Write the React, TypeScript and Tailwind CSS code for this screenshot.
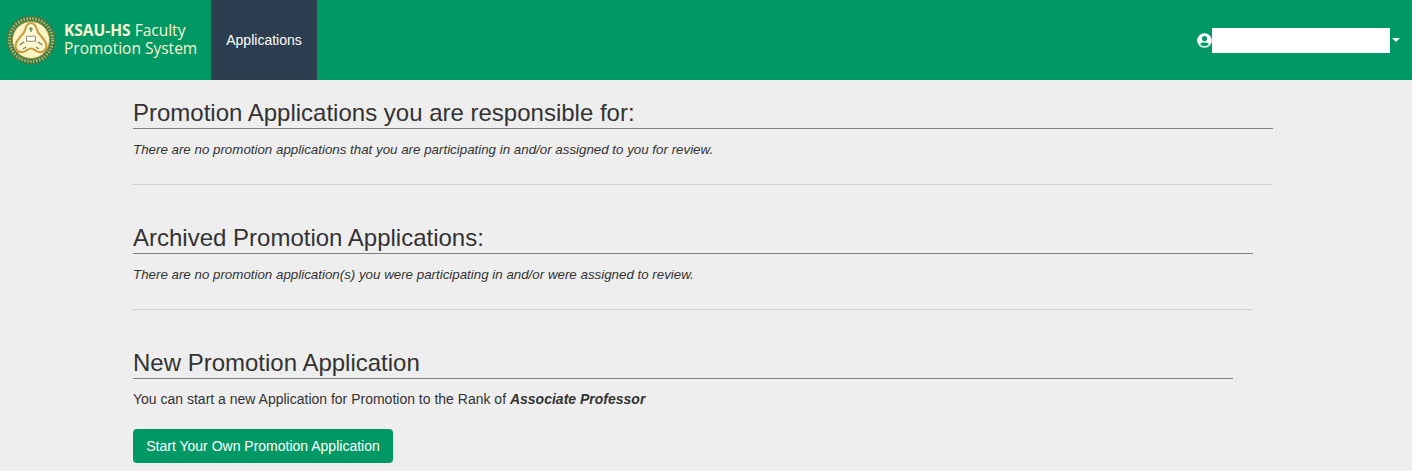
import { FaUserCircle } from "react-icons/fa";

const Logo = () => (
  <svg viewBox="0 0 50 50" className="w-[50px] h-[50px]">
    <circle cx="25" cy="25" r="24.5" fill="#3f7a45" />
    <circle cx="25" cy="25" r="21.5" fill="none" stroke="#a9b56f" strokeWidth="3" strokeDasharray="1.5 1.5" />
    <circle cx="25" cy="25" r="18.5" fill="#fdf4c6" stroke="#b59a3f" strokeWidth="1" />
    <path
      d="M25 8c3.500 0 5 3 6 7 1.200 4.500 7 8 9 13.500 1.800 5-2 9.500-7 8.500-3.500-.7-5-3.500-8-3.500s-4.500 2.800-8 3.500c-5 1-8.800-3.500-7-8.500 2-5.500 7.800-9 9-13.500 1-4 2.500-7 6-7z"
      fill="#fdf6d2"
      stroke="#c79f45"
      strokeWidth="2.2"
    />
    <path d="M20.500 21.500q2.200-1 4.500 0q2.300-1 4.500 0v5q-2.200-1-4.500 0q-2.300-1-4.500 0z" fill="#fffdf0" stroke="#6f7a50" strokeWidth="0.8" />
    <path d="M25 12v5M23 14h4" stroke="#4f8050" strokeWidth="1.2" />
    <path d="M13.500 30l4.500-3M36.500 30l-4.500-3M17 34l3-2M33 34l-3-2" stroke="#7f8558" strokeWidth="1.4" />
  </svg>
);

const SectionHeading = ({ children }: { children: string }) => (
  <h2 className="text-[24px] leading-[26px] text-[#333] border-b border-[#808080] pb-[2px]">{children}</h2>
);

export default function App() {
  return (
    <div className="min-h-[471px] bg-[#eeeeee] font-['Liberation_Sans',Arial,sans-serif] text-[#333] overflow-hidden">
      <nav className="h-[80px] bg-[#009966] flex items-stretch">
        <div className="flex items-center w-[211px] pl-[6px]">
          <Logo />
          <div className="ml-[8px] mb-[3px] text-[15.5px] leading-[18px] text-[#fdf5cf] font-['Open_Sans',sans-serif] whitespace-nowrap">
            <div>
              <span className="font-bold">KSAU-HS</span> Faculty
            </div>
            <div>Promotion System</div>
          </div>
        </div>
        <a className="w-[106px] bg-[#2c3e50] text-white text-[14px] flex items-center justify-center">Applications</a>
        <div className="ml-auto flex items-center pr-[12px]">
          <FaUserCircle className="w-[15px] h-[15px] text-white" />
          <div className="w-[178px] h-[25px] bg-white" />
          <span className="ml-[2px] w-0 h-0 border-x-[4px] border-x-transparent border-t-[4px] border-t-white" />
        </div>
      </nav>
      <main className="pl-[133px] pt-[20px]">
        <section className="w-[1140px]">
          <SectionHeading>Promotion Applications you are responsible for:</SectionHeading>
          <p className="text-[13.33px] leading-[17px] italic mt-[12px]">
            There are no promotion applications that you are participating in and/or assigned to you for review.
          </p>
          <hr className="border-[#d0d0d0] mt-[26px]" />
        </section>
        <section className="w-[1120px] mt-[40px]">
          <SectionHeading>Archived Promotion Applications:</SectionHeading>
          <p className="text-[13.33px] leading-[17px] italic mt-[12px]">
            There are no promotion application(s) you were participating in and/or were assigned to review.
          </p>
          <hr className="border-[#d0d0d0] mt-[26px]" />
        </section>
        <section className="w-[1100px] mt-[40px]">
          <SectionHeading>New Promotion Application</SectionHeading>
          <p className="text-[14px] leading-[20px] mt-[10px]">
            You can start a new Application for Promotion to the Rank of{" "}
            <em className="font-bold">Associate Professor</em>
          </p>
          <button className="mt-[20px] w-[260px] h-[34px] rounded-[4px] bg-[#009966] text-white text-[14px] flex items-center justify-center">
            Start Your Own Promotion Application
          </button>
        </section>
      </main>
    </div>
  );
}
